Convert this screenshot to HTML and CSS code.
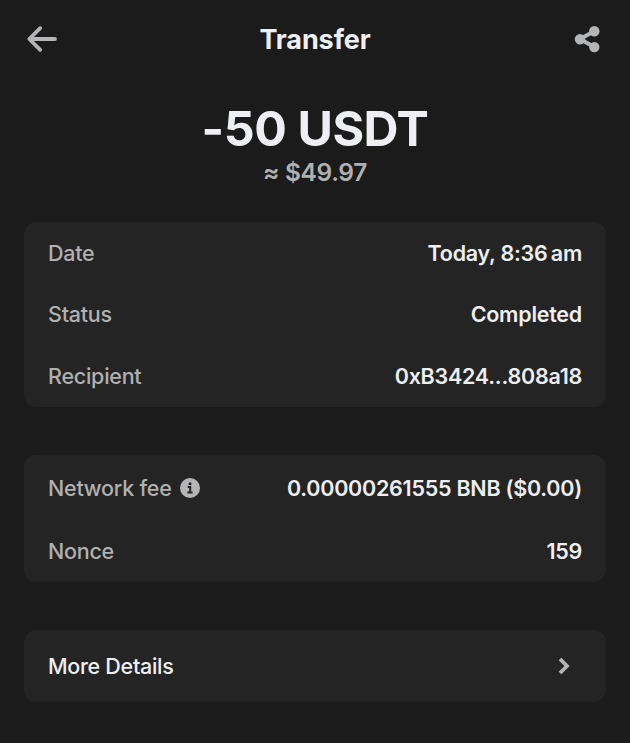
FILE: index.html
```html
<!DOCTYPE html>
<html lang="en">
<head>
    <meta charset="UTF-8">
    <meta name="viewport" content="width=device-width, initial-scale=1.0">
    <title>Transfer</title>
    <link rel="stylesheet" href="styles.css">
</head>
<body>
    <header>
        <button class="icon-button" aria-label="Back">
            <svg width="32" height="32" viewBox="0 0 32 32" fill="none" stroke="currentColor" stroke-width="3.8" stroke-linecap="round" stroke-linejoin="round">
                <path d="M29 16H3.5M14.2 5.2L3.3 16l10.9 10.8"/>
            </svg>
        </button>
        <h1>Transfer</h1>
        <button class="icon-button" aria-label="Share">
            <svg width="32" height="28" viewBox="0 0 32 28" fill="currentColor">
                <path d="M22.3 6.3L8 14l14.3 8" fill="none" stroke="currentColor" stroke-width="4"/>
                <circle cx="22.3" cy="6.3" r="5.2"/>
                <circle cx="8" cy="14.2" r="5.2"/>
                <circle cx="22.3" cy="22.1" r="5.2"/>
            </svg>
        </button>
    </header>

    <main>
        <div class="summary">
            <div class="amount">-50 USDT</div>
            <div class="fiat">≈ $49.97</div>
        </div>

        <div class="card">
            <div class="row">
                <span class="label">Date</span>
                <span class="value">Today, 8:36&#8239;am</span>
            </div>
            <div class="row">
                <span class="label">Status</span>
                <span class="value">Completed</span>
            </div>
            <div class="row">
                <span class="label">Recipient</span>
                <span class="value">0xB3424...808a18</span>
            </div>
        </div>

        <div class="card fees">
            <div class="row">
                <span class="label">Network fee
                    <svg class="info" width="20" height="20" viewBox="0 0 20 20">
                        <circle cx="10" cy="10" r="10" fill="currentColor"/>
                        <circle cx="10" cy="5.7" r="1.5" fill="#242424"/>
                        <path d="M7.8 8.9h2.4v5.4M7.4 14.5h5.2" fill="none" stroke="#242424" stroke-width="2"/>
                    </svg>
                </span>
                <span class="value">0.00000261555 BNB ($0.00)</span>
            </div>
            <div class="row">
                <span class="label">Nonce</span>
                <span class="value">159</span>
            </div>
        </div>

        <a class="card more" href="#">
            <span>More Details</span>
            <svg class="chevron" width="12" height="18" viewBox="0 0 12 18" fill="none" stroke="currentColor" stroke-width="3.8">
                <path d="M2 2l7 7-7 7"/>
            </svg>
        </a>
    </main>
</body>
</html>
```

FILE: styles.css
```css
:root {
    --bg: #1b1b1b;
    --card: #242424;
    --text: #eeeff2;
    --muted: #b0b0b0;
    --icon: #b4b5b7;
}

* {
    box-sizing: border-box;
}

body {
    margin: 0;
    background: var(--bg);
    color: var(--text);
    font-family: Inter, sans-serif;
    font-size: 21.5px;
    font-weight: 500;
}

header {
    display: flex;
    justify-content: space-between;
    align-items: center;
    height: 78px;
    padding: 0 26px;
}

h1 {
    margin: 0;
    font-size: 27px;
    font-weight: 700;
    letter-spacing: -0.1px;
}

.icon-button {
    display: flex;
    padding: 0;
    border: none;
    background: none;
    color: var(--icon);
    cursor: pointer;
}

main {
    padding: 0 24px;
}

.summary {
    padding-top: 21px;
    height: 144px;
    text-align: center;
}

.amount {
    font-size: 48.4px;
    font-weight: 700;
    letter-spacing: -0.45px;
    line-height: 60px;
}

.fiat {
    color: var(--muted);
    font-size: 24.5px;
    font-weight: 600;
    letter-spacing: -0.35px;
    line-height: 26px;
}

.card {
    margin-bottom: 48px;
    padding: 0 24px;
    border-radius: 12px;
    background: var(--card);
}

.row {
    display: flex;
    justify-content: space-between;
    align-items: center;
    height: 61.5px;
}

.label {
    display: flex;
    align-items: center;
    gap: 8px;
    color: var(--muted);
    letter-spacing: -0.25px;
}

.value {
    font-weight: 600;
    letter-spacing: -0.25px;
}

.fees {
    height: 127px;
    padding-top: 2px;
}

.fees .row {
    height: 63px;
}

.info {
    color: var(--icon);
}

.more {
    display: flex;
    justify-content: space-between;
    align-items: center;
    height: 72px;
    padding-right: 36px;
    color: var(--text);
    letter-spacing: -0.3px;
    text-decoration: none;
}

.chevron {
    color: var(--icon);
}
```
